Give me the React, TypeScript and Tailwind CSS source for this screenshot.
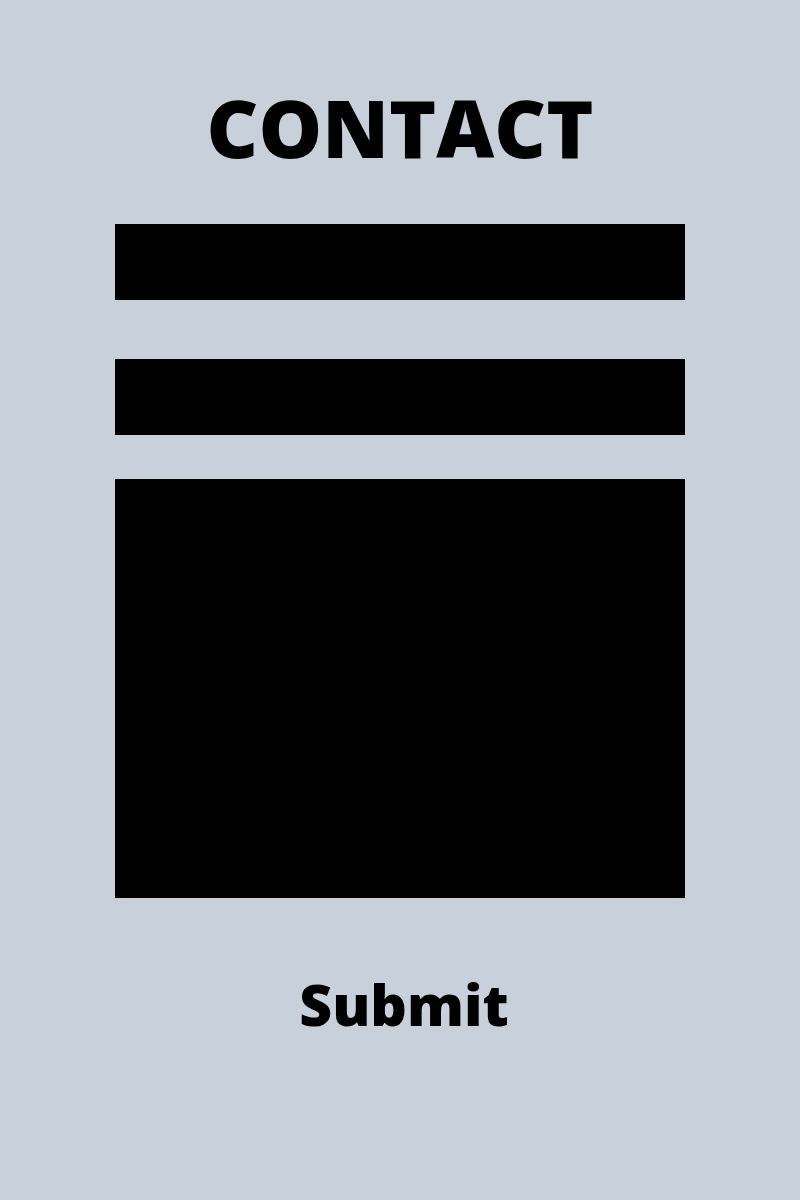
export default function App() {
  return (
    <div
      className="w-[800px] h-[1200px] bg-[#c8d0da] flex flex-col items-center text-black"
      style={{ fontFamily: '"Open Sans", "Liberation Sans", sans-serif' }}
    >
      <h1 className="mt-[75px] text-[80px] font-extrabold leading-[104px]">CONTACT</h1>
      <div className="mt-[45px] w-[570px] flex flex-col">
        <div className="h-[76px] bg-black" />
        <div className="mt-[59px] h-[76px] bg-black" />
        <div className="mt-[44px] h-[419px] bg-black" />
      </div>
      <button className="mt-[68px] pl-2 text-[57px] font-extrabold leading-[76px]">Submit</button>
    </div>
  );
}
